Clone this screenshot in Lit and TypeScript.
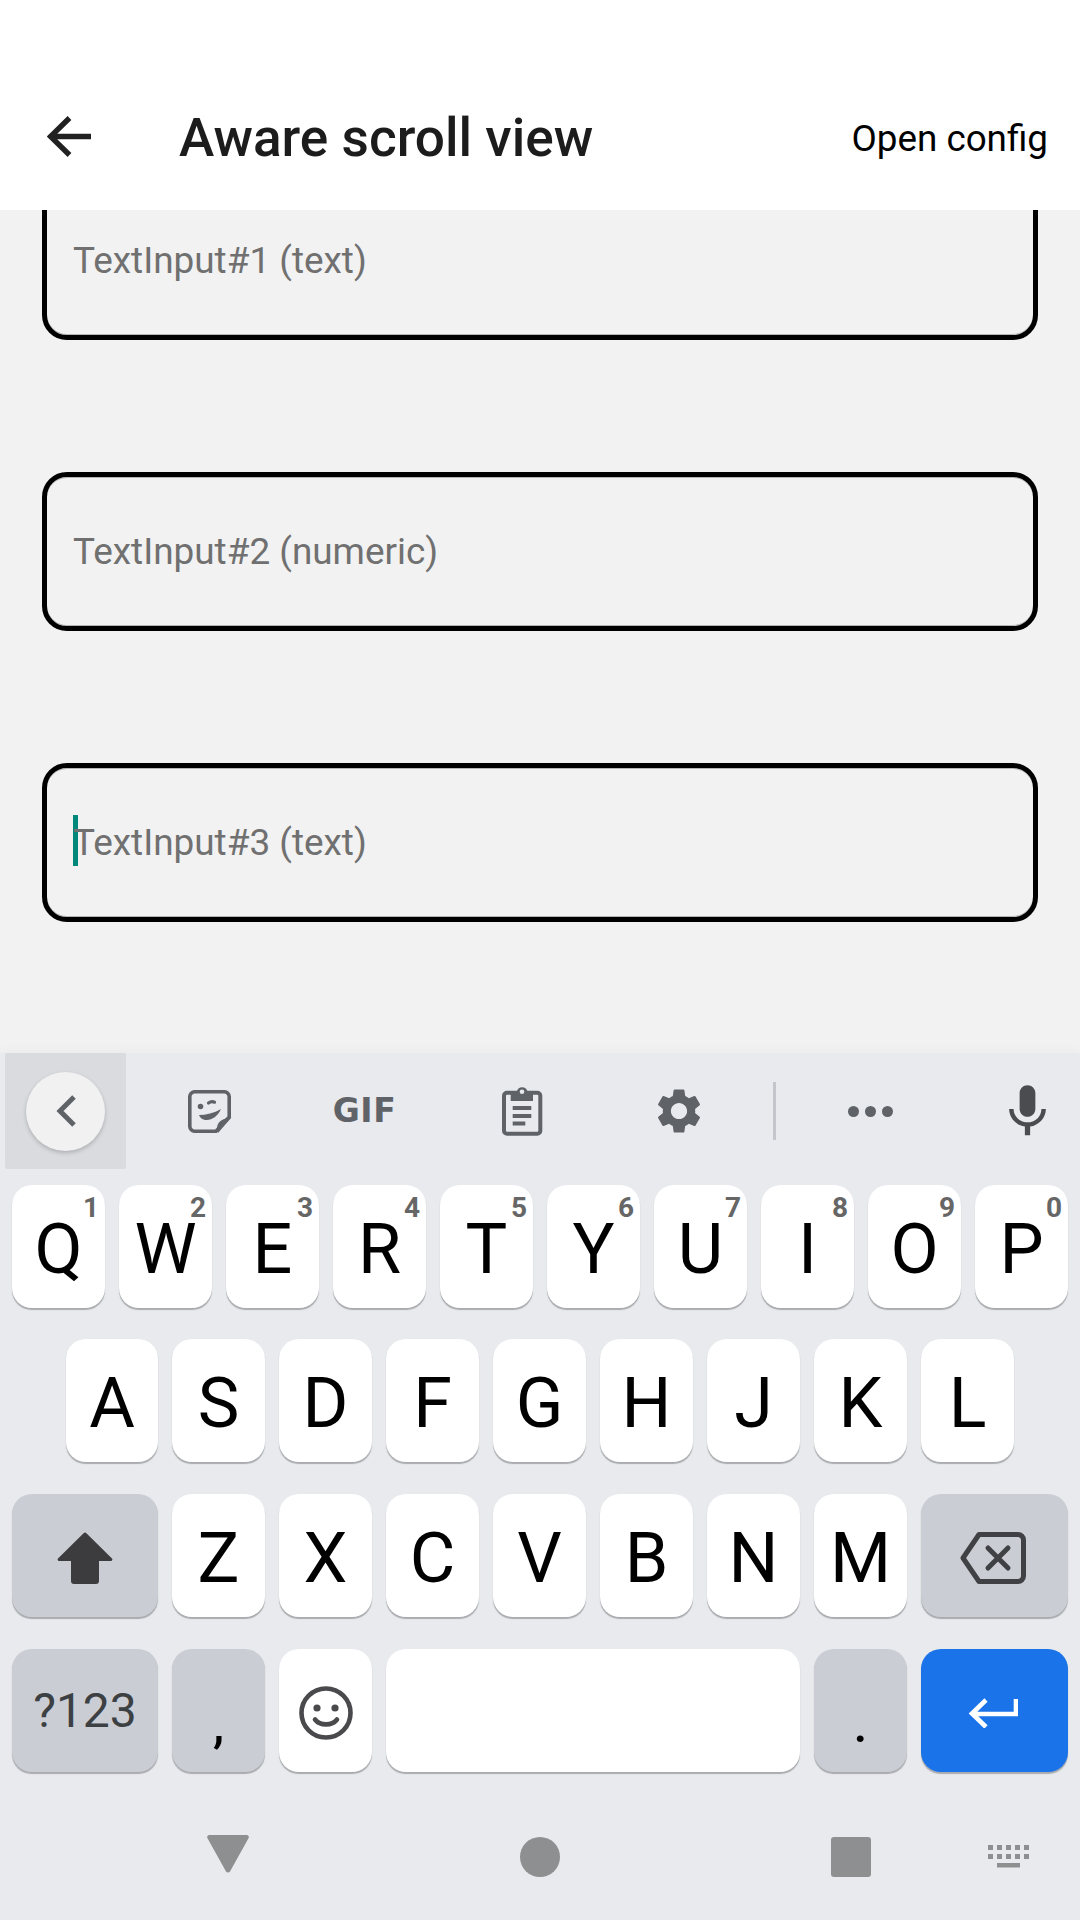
import { LitElement, html, css, svg } from "lit";
import { customElement } from "lit/decorators.js";

const ROW1 = ["Q", "W", "E", "R", "T", "Y", "U", "I", "O", "P"];
const NUMS = ["1", "2", "3", "4", "5", "6", "7", "8", "9", "0"];
const ROW2 = ["A", "S", "D", "F", "G", "H", "J", "K", "L"];
const ROW3 = ["Z", "X", "C", "V", "B", "N", "M"];

const GEAR =
  "M19.14 12.94c.04-.3.06-.61.06-.94 0-.32-.02-.64-.07-.94l2.03-1.58c.18-.14.23-.41.12-.61l-1.92-3.32c-.12-.22-.37-.29-.59-.22l-2.39.96c-.5-.38-1.03-.7-1.62-.94l-.36-2.54c-.04-.24-.24-.41-.48-.41h-3.84c-.24 0-.43.17-.47.41l-.36 2.54c-.59.24-1.13.57-1.62.94l-2.39-.96c-.22-.08-.47 0-.59.22L2.74 8.87c-.12.21-.08.47.12.61l2.03 1.58c-.05.3-.09.63-.09.94s.02.64.07.94l-2.03 1.58c-.18.14-.23.41-.12.61l1.92 3.32c.12.22.37.29.59.22l2.39-.96c.5.38 1.03.7 1.62.94l.36 2.54c.05.24.24.41.48.41h3.84c.24 0 .44-.17.47-.41l.36-2.54c.59-.24 1.13-.56 1.62-.94l2.39.96c.22.08.47 0 .59-.22l1.92-3.32c.12-.22.07-.47-.12-.61l-2.01-1.58zM12 15.6c-1.98 0-3.6-1.62-3.6-3.6s1.62-3.6 3.6-3.6 3.6 1.62 3.6 3.6-1.62 3.6-3.6 3.6z";
const MIC =
  "M12 14c1.66 0 2.99-1.34 2.99-3L15 5c0-1.66-1.34-3-3-3S9 3.34 9 5v6c0 1.66 1.34 3 3 3zm5.3-3c0 3-2.54 5.1-5.3 5.1S6.7 14 6.7 11H5c0 3.41 2.72 6.23 6 6.72V21h2v-3.28c3.28-.48 6-3.3 6-6.72h-1.7z";

@customElement("app-root")
export class AppRoot extends LitElement {
  static styles = css`
    :host {
      display: flex;
      flex-direction: column;
      width: 1080px;
      height: 1920px;
      overflow: hidden;
      font-family: Roboto, sans-serif;
      background: #f2f2f2;
    }
    svg {
      display: block;
    }

    /* app bar */
    .appbar {
      flex: none;
      height: 210px;
      box-sizing: border-box;
      padding: 116px 32px 0 47px;
      display: flex;
      align-items: flex-start;
      background: #fff;
      position: relative;
      z-index: 1;
    }
    .title {
      margin-left: 88px;
      font-size: 53.2px;
      line-height: 45px;
      font-weight: 500;
      color: #1c1c1c;
      flex: 1;
    }
    .config {
      font-size: 36.8px;
      line-height: 45px;
      color: #000;
    }

    /* scrolled form */
    .scroller {
      flex: 1;
      min-height: 0;
      overflow: hidden;
    }
    .fields {
      margin-top: -29px;
      padding: 0 42px;
      display: flex;
      flex-direction: column;
      gap: 132px;
    }
    .field {
      height: 159px;
      box-sizing: border-box;
      border: 5px solid #000;
      border-radius: 25px;
      box-shadow: inset 0 1px 0 #b4b4b4, inset 0 -1px 0 #b4b4b4;
      padding-left: 26px;
      display: flex;
      align-items: center;
      font-size: 36.9px;
      color: #707070;
    }
    .caret {
      flex: none;
      width: 5px;
      height: 51px;
      margin-right: -5px;
      margin-top: -4px;
      background: #00897b;
    }

    /* keyboard */
    .keyboard {
      flex: none;
      height: 867px;
      background: #e8eaed;
      box-shadow: 0 -3px 10px rgba(0, 0, 0, 0.03);
    }
    .toolbar {
      height: 132px;
      display: grid;
      grid-template-columns: 5px 121px 167px 143px 172px 142px 23px 3px 188px 116px;
      grid-template-rows: 116px;
      align-items: center;
      justify-items: center;
    }
    .tile {
      grid-column: 2;
      width: 121px;
      height: 116px;
      background: #d9dbdf;
      border-radius: 2px;
      display: flex;
      align-items: center;
      justify-content: center;
    }
    .circle {
      width: 79px;
      height: 79px;
      border-radius: 50%;
      background: #f1f1f1;
      box-shadow: 0 2px 4px rgba(0, 0, 0, 0.2);
      display: flex;
      align-items: center;
      justify-content: center;
    }
    .gif {
      font-family: "DejaVu Sans", sans-serif;
      font-size: 33px;
      line-height: 36px;
      font-weight: 700;
      letter-spacing: 0.5px;
      color: #5f6368;
    }
    .divider {
      grid-column: 8;
      width: 3px;
      height: 58px;
      background: #c4c6cb;
    }
    .mic {
      justify-self: start;
      margin-left: 32px;
    }

    .rows {
      display: flex;
      flex-direction: column;
      gap: 31.67px;
    }
    .row {
      display: flex;
      justify-content: center;
      gap: 14px;
    }
    .home-row {
      margin: -1px 0 1px;
    }
    .home-row .key:first-child {
      width: 92px;
    }
    .key {
      position: relative;
      flex: none;
      width: 93px;
      height: 123px;
      box-sizing: border-box;
      padding-top: 5px;
      border-radius: 20px;
      background: #fff;
      box-shadow: 0 2px 1px -0.5px #a9abaf;
      display: flex;
      align-items: center;
      justify-content: center;
      font-size: 70px;
      color: #000;
    }
    .num {
      position: absolute;
      top: 9px;
      right: 6px;
      font-size: 28px;
      line-height: 27px;
      font-weight: 700;
      color: #666;
    }
    .wide {
      width: 146px;
    }
    .wider {
      width: 147px;
    }
    .space {
      width: 414px;
    }
    .fn {
      background: #cacdd4;
    }
    .enter {
      background: #1a73e8;
    }
    .sym {
      font-size: 48px;
      color: #3c4043;
      padding-top: 0;
    }
    .mark {
      font-size: 50px;
      font-weight: 500;
      align-items: flex-end;
      padding: 0 0 18px;
    }
    .nudge {
      margin-right: 3px;
    }

    /* navigation bar */
    .nav {
      margin-top: 64px;
      padding-left: 207px;
      display: flex;
      align-items: center;
      height: 42px;
    }
    .back {
      margin-top: -5px;
    }
    .home {
      width: 40px;
      height: 40px;
      margin-left: 271px;
      border-radius: 50%;
      background: #8e8f91;
    }
    .recent {
      width: 40px;
      height: 40px;
      margin-left: 271px;
      border-radius: 3px;
      background: #8e8f91;
    }
    .switch {
      margin-left: 117px;
    }
  `;

  private _field(label: string, caret = false) {
    return html`<div class="field">
      ${caret ? html`<span class="caret"></span>` : ""}<span>${label}</span>
    </div>`;
  }

  private _letter(letter: string, num?: string) {
    return html`<div class="key">
      ${letter}${num ? html`<span class="num">${num}</span>` : ""}
    </div>`;
  }

  render() {
    return html`
      <header class="appbar">
        <svg width="44" height="41" viewBox="0 0 44 41" fill="none" stroke="#212121" stroke-width="5.4">
          <path d="M44 20.5H3.500M22.500 2 3.500 20.5 22.500 39" />
        </svg>
        <div class="title">Aware scroll view</div>
        <div class="config">Open config</div>
      </header>

      <main class="scroller">
        <div class="fields">
          ${this._field("TextInput#1 (text)")}
          ${this._field("TextInput#2 (numeric)")}
          ${this._field("TextInput#3 (text)", true)}
        </div>
      </main>

      <section class="keyboard">
        <div class="toolbar">
          <div class="tile">
            <div class="circle">
              <svg width="20" height="32" viewBox="0 0 20 32" fill="none" stroke="#5f6368" stroke-width="5">
                <path d="M18 2 4 16l14 14" />
              </svg>
            </div>
          </div>
          <svg width="43" height="43" viewBox="0 0 43 43" fill="none" stroke="#5f6368" stroke-width="3.600">
            <path d="M7 1.800h29a5 5 0 0 1 5.200 5.200v20L28 41.200H7A5 5 0 0 1 1.800 36V7A5 5 0 0 1 7 1.800z" />
            <path d="M43 28 30 43c-3-8 1-15 13-15z" fill="#5f6368" stroke="none" />
            <circle cx="12.500" cy="16.500" r="2.800" fill="#5f6368" stroke="none" />
            <path d="M20.500 13c2-1.500 4-1.800 6-.8" stroke-width="3.200" stroke-linecap="round" />
            <path d="M11 25c7 0 15-2 22-6-3 7-9 11-14 11-4 0-7-2-8-5z" fill="#5f6368" stroke="none" />
          </svg>
          <span class="gif">GIF</span>
          <svg width="41" height="50" viewBox="0 0 41 50" fill="none" stroke="#5f6368" stroke-width="4">
            <rect x="2" y="6.700" width="36.300" height="41" rx="3" />
            <path d="M8.700 5h6.200a5.500 5.500 0 0 1 10.500 0H31v10H8.700z" fill="#5f6368" stroke="none" />
            <circle cx="20" cy="5.700" r="2.300" fill="#e8eaed" stroke="none" />
            <path d="M10.700 22h18.600M10.700 30h18.600M10.700 37.500h12.600" />
          </svg>
          <svg width="54" height="54" viewBox="0 0 24 24" fill="#5f6368"><path d=${GEAR} /></svg>
          <span></span>
          <div class="divider"></div>
          <svg width="45" height="11" viewBox="0 0 45 11" fill="#5f6368">
            <circle cx="5.500" cy="5.500" r="5.500" /><circle cx="22.500" cy="5.500" r="5.500" /><circle cx="39.500" cy="5.500" r="5.500" />
          </svg>
          <svg class="mic" width="63" height="63" viewBox="0 0 24 24" fill="#4a4c50"><path d=${MIC} /></svg>
        </div>

        <div class="rows">
          <div class="row">${ROW1.map((k, i) => this._letter(k, NUMS[i]))}</div>
          <div class="row home-row">${ROW2.map((k) => this._letter(k))}</div>
          <div class="row">
            <div class="key wide fn">
              <svg width="56" height="52" viewBox="0 0 56 52" fill="#3c3c3f">
                <path d="M26.600 1.200a2 2 0 0 1 2.800 0L55 26.500a1.500 1.500 0 0 1-1 2.500H42v20a3 3 0 0 1-3 3H17a3 3 0 0 1-3-3V29H2a1.500 1.500 0 0 1-1-2.500z" />
              </svg>
            </div>
            ${ROW3.map((k) => this._letter(k))}
            <div class="key wider fn">
              <svg class="nudge" width="66" height="52" viewBox="0 0 66 52" fill="none" stroke="#404144" stroke-width="5" stroke-linejoin="round" stroke-linecap="round">
                <path d="M19 2.500h39a5.500 5.500 0 0 1 5.500 5.500v36a5.500 5.500 0 0 1-5.500 5.500H19L3 26z" />
                <path d="M28 16l20 20M48 16 28 36" />
              </svg>
            </div>
          </div>
          <div class="row">
            <div class="key wide fn sym">?123</div>
            <div class="key fn mark">,</div>
            <div class="key">
              <svg width="54" height="54" viewBox="0 0 54 54" fill="none" stroke="#4a4a4d" stroke-width="4.600">
                <circle cx="27" cy="27" r="24.500" />
                <circle cx="18" cy="22" r="3.600" fill="#4a4a4d" stroke="none" />
                <circle cx="36" cy="22" r="3.600" fill="#4a4a4d" stroke="none" />
                <path d="M16 33.500c5 6.500 17 6.500 22 0" stroke-linecap="round" />
              </svg>
            </div>
            <div class="key space"></div>
            <div class="key fn mark">.</div>
            <div class="key wider enter">
              <svg class="nudge" width="50" height="30" viewBox="0 0 50 30" fill="none" stroke="#fff" stroke-width="4.600">
                <path d="M48 1v15H5M18 2 4 15.500 18 29" />
              </svg>
            </div>
          </div>
        </div>

        <nav class="nav">
          <svg class="back" width="42" height="38" viewBox="0 0 42 38" fill="#8e8f91">
            <path d="M2.500 0h37a2.200 2.200 0 0 1 2 3.300L23 36.500a2.400 2.400 0 0 1-4 0L.5 3.300A2.200 2.200 0 0 1 2.500 0z" />
          </svg>
          <div class="home"></div>
          <div class="recent"></div>
          <svg class="switch" width="41" height="23" viewBox="0 0 41 23" fill="#8e8f91">
            ${[0, 9, 18, 27, 36].map(
              (x) => svg`<rect x=${x} y="0" width="5" height="5" /><rect x=${x} y="9" width="5" height="5" />`
            )}
            <rect x="9" y="18" width="23" height="4.500" />
          </svg>
        </nav>
      </section>
    `;
  }
}
